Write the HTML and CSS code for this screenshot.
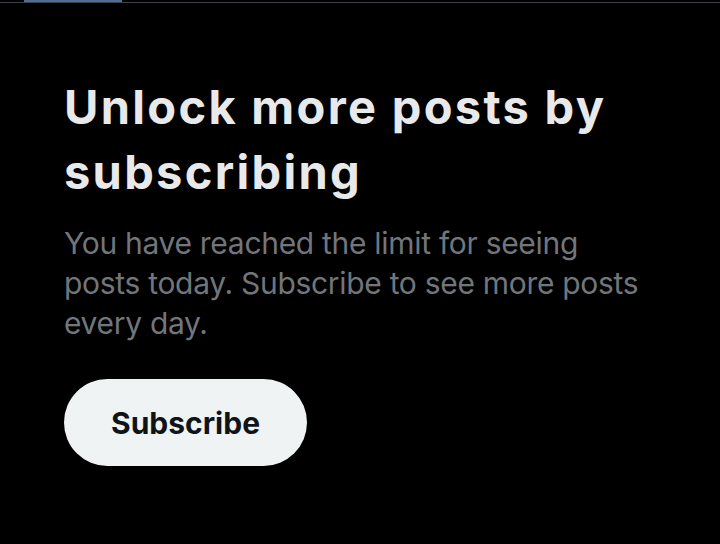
FILE: index.html
```html
<!DOCTYPE html>
<html lang="en">
<head>
  <meta charset="UTF-8" />
  <meta name="viewport" content="width=device-width, initial-scale=1.0"/>
  <title>Unlock more posts</title>
  <link rel="stylesheet" href="styles.css">
</head>
<body>

<!-- Полоса загрузки вверху -->
<div class="topbar">
  <div class="progress"></div>
</div>

<div class="container">
  <h1>Unlock more posts by subscribing</h1>
  <p class="note">You have reached the limit for seeing posts today. Subscribe to see more posts every day.</p>
  <button class="subscribe">Subscribe</button>
</div>

</body>
</html>
```

FILE: styles.css
```css
body {
  margin: 0;
  background-color: #000000;
  font-family: Inter, "Noto Sans", Arial, sans-serif;
  color: #e7e9ea;
}
.topbar {
  height: 2px;
  border-bottom: 1px solid #3e4145;
}
.progress {
  margin-left: 24px;
  width: 98px;
  height: 2px;
  background-color: #4f6d99;
}
.container {
  width: 592px;
  padding: 71px 0 0 64px;
}
h1 {
  margin: 0;
  font-size: 47px;
  line-height: 65px;
  font-weight: 700;
  letter-spacing: 2.3px;
  color: #e7e9ea;
}
.note {
  margin: 19px 0 0;
  font-size: 30px;
  line-height: 40px;
  letter-spacing: -0.3px;
  color: #71767b;
}
.subscribe {
  margin-top: 36px;
  height: 87px;
  padding: 0 47px;
  border: none;
  border-radius: 44px;
  background-color: #eff3f4;
  color: #0f1419;
  font-family: inherit;
  font-size: 30px;
  font-weight: 700;
  cursor: pointer;
}
```
